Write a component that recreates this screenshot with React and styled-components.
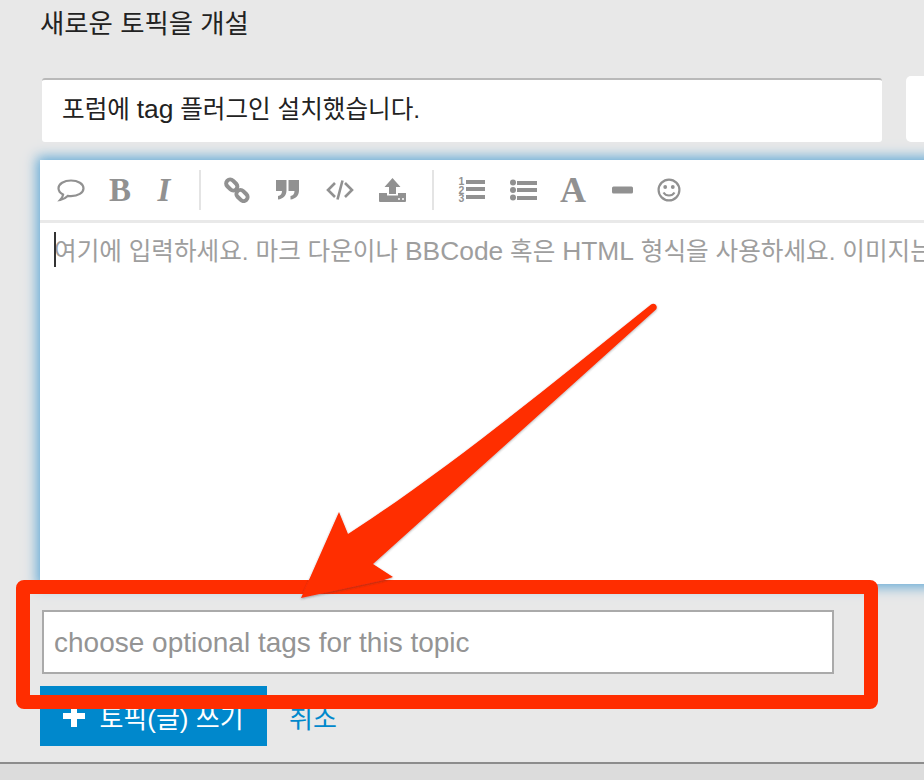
import React from "react";
import styled, { createGlobalStyle } from "styled-components";

const GlobalStyle = createGlobalStyle`
  html, body {
    margin: 0;
    padding: 0;
    background: #e8e8e8;
  }
`;

const fontStack = `"Liberation Sans", "Noto Sans CJK KR", sans-serif`;
const iconGrey = "#919191";

const SpeechIcon = () => (
  <svg width="28" height="23" viewBox="0 0 28 23">
    <path
      d="M14 1.500C7 1.500 1.500 4.900 1.500 9.300c0 2.600 1.800 4.900 4.600 6.300-.2 1.600-1 3.200-2.800 5.200 3-.6 5.600-2 7.400-3.900 1 .2 2.100.3 3.300.3 7 0 12.500-3.400 12.500-7.900S21 1.500 14 1.500z"
      fill="none"
      stroke={iconGrey}
      strokeWidth="2.200"
    />
  </svg>
);

const LinkIcon = () => (
  <svg width="26" height="26" viewBox="0 0 26 26">
    <g fill="none" stroke={iconGrey} strokeWidth="4">
      <rect x="1.500" y="4" width="12.500" height="8" rx="4" transform="rotate(45 7.750 8)" />
      <rect x="11.750" y="14.500" width="12.500" height="8" rx="4" transform="rotate(45 18 18.500)" />
    </g>
  </svg>
);

const QuoteIcon = () => (
  <svg width="25" height="22" viewBox="0 0 25 22">
    <path
      fill={iconGrey}
      d="M1 1h10.500v10.500c0 5-3.500 8.500-8.500 9V17c2.500-.5 4-2 4-5H1zM13.500 1H24v10.500c0 5-3.500 8.500-8.500 9V17c2.500-.5 4-2 4-5h-6z"
    />
  </svg>
);

const CodeIcon = () => (
  <svg width="28" height="22" viewBox="0 0 28 22">
    <path
      fill="none"
      stroke={iconGrey}
      strokeWidth="2.600"
      d="M9 4l-7 7 7 7M19 4l7 7-7 7M16.500 1.500l-5 19"
    />
  </svg>
);

const UploadIcon = () => (
  <svg width="27" height="24" viewBox="0 0 27 24">
    <path fill={iconGrey} d="M13.500 0l8 9H17v7h-7V9H5.500z" />
    <path
      fill={iconGrey}
      d="M0 15h8v2.500h11V15h8v8a1 1 0 01-1 1H1a1 1 0 01-1-1z"
    />
    <circle cx="20" cy="21" r="1" fill="#ffffff" />
    <circle cx="24" cy="21" r="1" fill="#ffffff" />
  </svg>
);

const NumberedIcon = () => (
  <svg width="27" height="30" viewBox="0 -2 27 30">
    <g fill={iconGrey}>
      <rect x="8" y="3" width="19" height="4" />
      <rect x="8" y="10" width="19" height="4" />
      <rect x="8" y="18" width="19" height="4" />
    </g>
    <g fill={iconGrey} fontFamily="Liberation Sans" fontWeight="700" fontSize="10.500">
      <text x="0.500" y="8">1</text>
      <text x="0.500" y="16.500">2</text>
      <text x="0.500" y="25">3</text>
    </g>
  </svg>
);

const BulletIcon = () => (
  <svg width="27" height="22" viewBox="0 0 27 22">
    <g fill={iconGrey}>
      <circle cx="3" cy="3.500" r="3" />
      <circle cx="3" cy="11" r="3" />
      <circle cx="3" cy="18.500" r="3" />
      <rect x="7" y="2" width="20" height="4" />
      <rect x="7" y="9" width="20" height="4" />
      <rect x="7" y="17" width="20" height="4" />
    </g>
  </svg>
);

const RuleIcon = () => (
  <svg width="21" height="8" viewBox="0 0 21 8">
    <rect x="0" y="0.500" width="21" height="7" rx="1.500" fill={iconGrey} />
  </svg>
);

const SmileIcon = () => (
  <svg width="24" height="24" viewBox="0 0 24 24">
    <circle cx="12" cy="12" r="10.400" fill="none" stroke={iconGrey} strokeWidth="2.200" />
    <circle cx="8.200" cy="9" r="1.900" fill={iconGrey} />
    <circle cx="15.800" cy="9" r="1.900" fill={iconGrey} />
    <path d="M6.500 14.500c1.300 2 3.200 3 5.500 3s4.200-1 5.500-3" fill="none" stroke={iconGrey} strokeWidth="2.200" />
  </svg>
);

const PlusIcon = () => (
  <svg width="22" height="22" viewBox="0 0 22 22">
    <path fill="#ffffff" d="M8 0h6v8h8v6h-8v8H8v-8H0V8h8z" />
  </svg>
);

const App = () => {
  return (
    <Page>
      <GlobalStyle />
      <Title>새로운 토픽을 개설</Title>

      <TitleRow>
        <TitleField>포럼에 <Latin>tag</Latin> 플러그인 설치했습니다.</TitleField>
        <CategoryField />
      </TitleRow>

      <Editor>
        <Toolbar>
          <ToolButton $width={34}><SpeechIcon /></ToolButton>
          <GlyphButton $width={64} $size={33}>B</GlyphButton>
          <GlyphButton $width={24} $size={33} $italic>I</GlyphButton>
          <Divider $before={23} $after={11} />
          <ToolButton $width={50}><LinkIcon /></ToolButton>
          <ToolButton $width={50}><QuoteIcon /></ToolButton>
          <ToolButton $width={56}><CodeIcon /></ToolButton>
          <ToolButton $width={48}><UploadIcon /></ToolButton>
          <Divider $before={16} $after={12} />
          <ToolButton $width={50}><NumberedIcon /></ToolButton>
          <ToolButton $width={54}><BulletIcon /></ToolButton>
          <GlyphButton $width={46} $size={36}>A</GlyphButton>
          <ToolButton $width={52}><RuleIcon /></ToolButton>
          <ToolButton $width={42}><SmileIcon /></ToolButton>
        </Toolbar>
        <Placeholder>
          <Caret />
          여기에 입력하세요. 마크 다운이나 <Latin>BBCode</Latin> 혹은 <Latin>HTML</Latin> 형식을 사용하세요. 이미지는
        </Placeholder>
      </Editor>

      <TagField>choose optional tags for this topic</TagField>

      <Actions>
        <SubmitButton>
          <PlusIcon />
          토픽(글) 쓰기
        </SubmitButton>
        <CancelLink>취소</CancelLink>
      </Actions>

      <Footer />

      <Highlight />
      <Arrow viewBox="0 0 924 780">
        <defs>
          <filter id="arrow-shadow" x="-5%" y="-5%" width="110%" height="110%">
            <feDropShadow dx="0" dy="1" stdDeviation="0.800" floodColor="#333" floodOpacity="0.4" />
          </filter>
        </defs>
        <path
          filter="url(#arrow-shadow)"
          fill="#ff2d00"
          d="M651 304.500C652.500 303.300 654.500 303.500 655.800 304.800 657.200 306.300 657 308.500 655.700 309.800L373 564 393 577 384 580 301 598 339 512 348 534C450 468 550 385 651 304.500z"
        />
      </Arrow>
    </Page>
  );
};

const Page = styled.div`
  position: relative;
  width: 924px;
  height: 780px;
  overflow: hidden;
  background: #e8e8e8;
  font-family: ${fontStack};
`;

const Latin = styled.span`
  font-size: 26.400px;
`;

const Title = styled.h1`
  margin: 0;
  padding: 7px 0 0 40px;
  height: 46px;
  box-sizing: border-box;
  font-size: 26.400px;
  line-height: 34px;
  font-weight: 400;
  color: #222222;
`;

const TitleRow = styled.div`
  display: flex;
  gap: 24px;
  margin: 32px 0 0 42px;
`;

const TitleField = styled.div`
  flex: 0 0 840px;
  height: 64px;
  box-sizing: border-box;
  padding-left: 20px;
  background: #ffffff;
  border-top: 2px solid #b9b9b9;
  border-radius: 3px;
  font-size: 24.600px;
  line-height: 58px;
  color: #222222;
`;

const CategoryField = styled.div`
  flex: 0 0 60px;
  height: 66px;
  margin-top: -2px;
  background: #ffffff;
  border-radius: 5px;
`;

const Editor = styled.div`
  width: 900px;
  height: 424px;
  margin: 18px 0 0 40px;
  background: #ffffff;
  box-shadow: 0 0 12px 3px #62a9d6;
`;

const Toolbar = styled.div`
  display: flex;
  align-items: center;
  height: 60px;
  padding-left: 14px;
  border-bottom: 3px solid #e9e9e9;
`;

const ToolButton = styled.span`
  display: flex;
  flex: 0 0 ${(p) => p.$width}px;
  justify-content: center;
  align-items: center;
`;

const GlyphButton = styled.span`
  flex: 0 0 ${(p) => p.$width}px;
  text-align: center;
  font-family: "Liberation Serif", serif;
  font-weight: 700;
  font-style: ${(p) => (p.$italic ? "italic" : "normal")};
  font-size: ${(p) => p.$size}px;
  line-height: 1;
  color: ${iconGrey};
`;

const Divider = styled.span`
  flex: 0 0 2px;
  height: 40px;
  margin: 0 ${(p) => p.$after}px 0 ${(p) => p.$before}px;
  background: #e4e4e4;
`;

const Placeholder = styled.div`
  position: relative;
  padding: 13px 0 0 14px;
  font-size: 24.600px;
  line-height: 30px;
  color: #9e9e9e;
  white-space: nowrap;
  overflow: hidden;
`;

const Caret = styled.span`
  position: absolute;
  left: 14px;
  top: 9px;
  width: 2px;
  height: 38px;
  background: #333333;
`;

const TagField = styled.div`
  width: 792px;
  height: 64px;
  box-sizing: border-box;
  margin: 26px 0 0 42px;
  padding-left: 10px;
  background: #ffffff;
  border: 2px solid #aaaaaa;
  font-size: 28px;
  line-height: 62px;
  color: #949494;
`;

const Actions = styled.div`
  display: flex;
  align-items: center;
  gap: 22px;
  margin: 12px 0 0 40px;
`;

const SubmitButton = styled.div`
  display: flex;
  align-items: center;
  justify-content: center;
  gap: 14px;
  width: 227px;
  height: 60px;
  background: #0088cc;
  color: #ffffff;
  font-size: 26px;
`;

const CancelLink = styled.span`
  font-size: 26px;
  color: #0088cc;
`;

const Footer = styled.div`
  height: 18px;
  margin-top: 16px;
  background: #dcdcdc;
  border-top: 2px solid #8c8c8c;
`;

const Highlight = styled.div`
  position: absolute;
  left: 16px;
  top: 580px;
  width: 862px;
  height: 129px;
  box-sizing: border-box;
  border: 14px solid #ff2d00;
  border-radius: 8px;
`;

const Arrow = styled.svg`
  position: absolute;
  left: 0;
  top: 0;
  width: 924px;
  height: 780px;
`;

export default App;
